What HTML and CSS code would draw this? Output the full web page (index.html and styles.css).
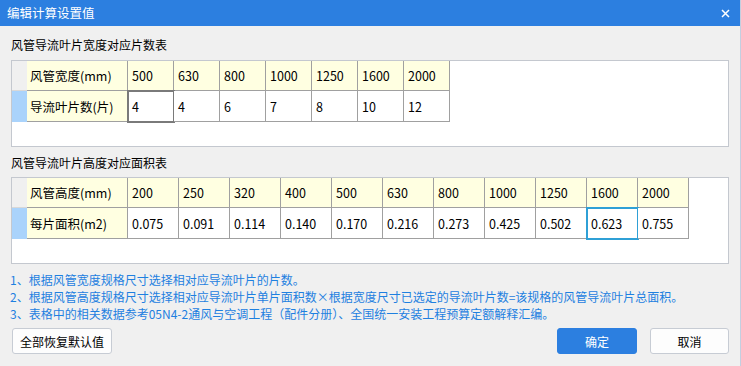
FILE: index.html
```html
<!DOCTYPE html>
<html lang="zh-CN">
<head>
<meta charset="utf-8">
<title>编辑计算设置值</title>
<link rel="stylesheet" href="styles.css">
</head>
<body>
<div class="dialog">
  <div class="titlebar">
    <span class="title">编辑计算设置值</span>
    <svg class="close" width="9" height="9" viewBox="0 0 9 9"><path d="M1 1 L8 8 M8 1 L1 8" stroke="#fff" stroke-width="1.5" fill="none"/></svg>
  </div>
  <div class="content">
    <div class="section-title">风管导流叶片宽度对应片数表</div>
    <div class="grid-box">
      <div class="grid g1">
        <div class="c corner"></div>
        <div class="c head label">风管宽度(mm)</div>
        <div class="c head">500</div>
        <div class="c head">630</div>
        <div class="c head">800</div>
        <div class="c head">1000</div>
        <div class="c head">1250</div>
        <div class="c head">1600</div>
        <div class="c head">2000</div>
        <div class="c rowsel"></div>
        <div class="c head label">导流叶片数(片)</div>
        <div class="c val sel-gray">4</div>
        <div class="c val">4</div>
        <div class="c val">6</div>
        <div class="c val">7</div>
        <div class="c val">8</div>
        <div class="c val">10</div>
        <div class="c val">12</div>
      </div>
    </div>
    <div class="section-title second">风管导流叶片高度对应面积表</div>
    <div class="grid-box">
      <div class="grid g2">
        <div class="c corner"></div>
        <div class="c head label">风管高度(mm)</div>
        <div class="c head">200</div>
        <div class="c head">250</div>
        <div class="c head">320</div>
        <div class="c head">400</div>
        <div class="c head">500</div>
        <div class="c head">630</div>
        <div class="c head">800</div>
        <div class="c head">1000</div>
        <div class="c head">1250</div>
        <div class="c head">1600</div>
        <div class="c head">2000</div>
        <div class="c rowsel"></div>
        <div class="c head label">每片面积(m2)</div>
        <div class="c val">0.075</div>
        <div class="c val">0.091</div>
        <div class="c val">0.114</div>
        <div class="c val">0.140</div>
        <div class="c val">0.170</div>
        <div class="c val">0.216</div>
        <div class="c val">0.273</div>
        <div class="c val">0.425</div>
        <div class="c val">0.502</div>
        <div class="c val sel-blue">0.623</div>
        <div class="c val">0.755</div>
      </div>
    </div>
    <div class="notes">
      <p>1、根据风管宽度规格尺寸选择相对应导流叶片的片数。</p>
      <p>2、根据风管高度规格尺寸选择相对应导流叶片单片面积数×根据宽度尺寸已选定的导流叶片数=该规格的风管导流叶片总面积。</p>
      <p>3、表格中的相关数据参考05N4-2通风与空调工程（配件分册）、全国统一安装工程预算定额解释汇编。</p>
    </div>
    <div class="buttons">
      <button class="btn">全部恢复默认值</button>
      <div class="spacer"></div>
      <button class="btn primary">确定</button>
      <button class="btn">取消</button>
    </div>
  </div>
</div>
</body>
</html>
```

FILE: styles.css
```css
* { box-sizing: border-box; }
html, body { margin: 0; padding: 0; }
body {
  width: 741px;
  height: 366px;
  overflow: hidden;
  background: #f0f0f0;
  font-family: "Noto Sans CJK SC", "Microsoft YaHei", sans-serif;
  font-size: 12px;
  color: #000;
}
.dialog {
  width: 741px;
  height: 366px;
  background: #f0f0f0;
  border-right: 1px solid #c3cfe0;
  display: flex;
  flex-direction: column;
}
.titlebar {
  height: 26px;
  background: #2c7fe0;
  color: #fff;
  display: flex;
  align-items: center;
  padding: 0 10px 0 7px;
}
.title { font-size: 12.5px; line-height: 26px; flex: 1; }
.close { display: block; }
.content {
  padding: 10px 11px 0 11px;
  display: flex;
  flex-direction: column;
}
.section-title {
  font-size: 12px;
  line-height: 18px;
  height: 18px;
  margin-bottom: 6px;
}
.section-title.second { margin-top: 7px; margin-bottom: 5px; }
.grid-box {
  width: 718px;
  background: #fff;
  border: 1px solid #c4c8cf;
  height: 87px;
}
.grid { display: grid; grid-template-rows: 30px 31px; }
.g1 { grid-template-columns: 15px 101px repeat(7, 46px); width: max-content; }
.g2 { grid-template-columns: 15px 101px repeat(11, 51px); width: max-content; }
.c {
  border-right: 1px solid #a0a0a0;
  border-bottom: 1px solid #a0a0a0;
  padding-left: 3px;
  display: flex;
  align-items: center;
  white-space: nowrap;
  font-size: 12.5px;
}
.head { background: #ffffe1; padding-left: 4px; }
.label { padding-left: 3px; }
.val { background: #fff; padding-left: 4px; }
.corner { background: #f0f0f0; border-right: none; border-bottom: 1px solid #d8d8d8; }
.rowsel { background: #aad3fb; border-right: none; border-bottom: none; }
.sel-gray { outline: 2px solid #7a7a7a; outline-offset: -1px; }
.sel-blue { outline: 2px solid #2fa0d6; outline-offset: -1px; }
.notes {
  margin-top: 7px;
  color: #1e80e0;
  font-size: 12px;
  line-height: 17px;
  margin-left: -1px;
}
.notes p { margin: 0; }
.buttons {
  display: flex;
  align-items: center;
  margin-top: 6px;
  gap: 13px;
  padding-left: 1px;
}
.spacer { flex: 1; }
.btn {
  font-family: "Noto Sans CJK SC", "Microsoft YaHei", sans-serif;
  font-size: 12px;
  height: 26px;
  border: 1px solid #c7ccd4;
  border-radius: 3px;
  background: #fdfdfd;
  color: #000;
  width: 80px;
  padding: 0;
}
.btn:first-child { width: 100px; }
.btn.primary {
  background: #2c7fe0;
  border-color: #2c7fe0;
  color: #fff;
}
.btn:last-child { width: 79px; }
```
